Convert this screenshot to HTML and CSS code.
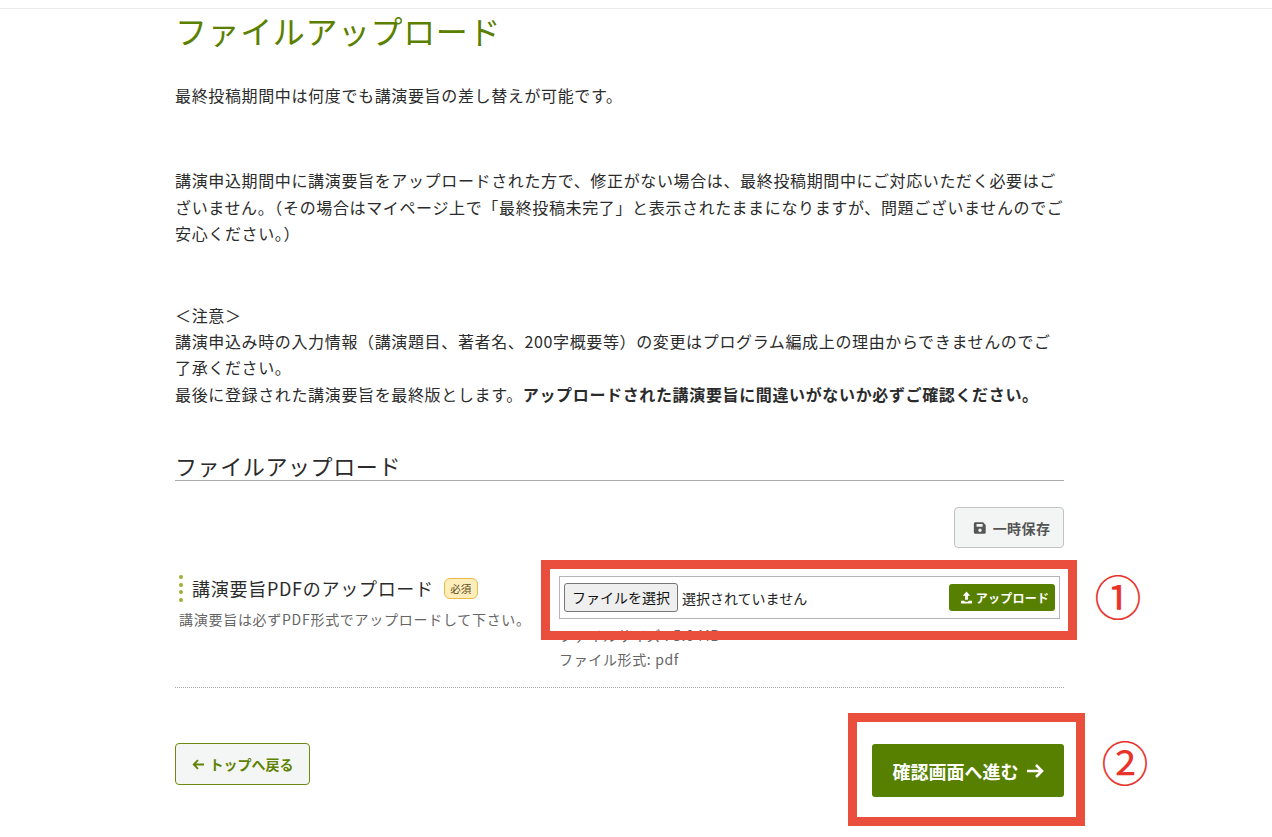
FILE: index.html
```html
<!DOCTYPE html>
<html lang="ja">
<head>
<meta charset="utf-8">
<title>ファイルアップロード</title>
<link rel="stylesheet" href="styles.css">
</head>
<body>
<div class="topline"></div>
<main class="page">
  <h1 class="title">ファイルアップロード</h1>
  <p class="lead">最終投稿期間中は何度でも講演要旨の差し替えが可能です。</p>
  <p class="para para-first">講演申込期間中に講演要旨をアップロードされた方で、修正がない場合は、最終投稿期間中にご対応いただく必要はございません。（その場合はマイページ上で「最終投稿未完了」と表示されたままになりますが、問題ございませんのでご安心ください。）</p>
  <p class="para para-second">＜注意＞<br>講演申込み時の入力情報（講演題目、著者名、200字概要等）の変更はプログラム編成上の理由からできませんのでご了承ください。<br>最後に登録された講演要旨を最終版とします。<strong>アップロードされた講演要旨に間違いがないか必ずご確認ください。</strong></p>
  <h2 class="section">ファイルアップロード</h2>
  <div class="save-row">
    <button class="btn-save" type="button">
      <svg class="ico-save" viewBox="0 0 16 16"><path fill="#555" fill-rule="evenodd" d="M2.5 1.5h9l3 3v8.500a1.500 1.500 0 0 1-1.500 1.500h-10.500a1.500 1.500 0 0 1-1.500-1.500v-10a1.500 1.500 0 0 1 1.500-1.500zM4 3.500v3h7v-3zM8 8.500a2 2 0 1 0 0 4a2 2 0 0 0 0-4z"/></svg>
      一時保存
    </button>
  </div>
  <div class="field">
    <div class="field-label">
      <div class="label-line">
        <span class="dots"><i></i><i></i><i></i><i></i></span>
        <span class="label-text">講演要旨PDFのアップロード</span>
        <span class="badge">必須</span>
      </div>
      <p class="hint">講演要旨は必ずPDF形式でアップロードして下さい。</p>
    </div>
    <div class="field-input">
      <div class="upload-box">
        <span class="file-btn">ファイルを選択</span>
        <span class="file-none">選択されていません</span>
        <button class="btn-upload" type="button">
          <svg class="ico-up" viewBox="0 0 14 14"><path fill="#fff" d="M7 .5 11 5H8.500v4.500h-3V5H3zM1 10.500h3.500c.5 1 1.500 1.200 2.500 1.200s2-.2 2.500-1.200H13v3H1z"/></svg>
          アップロード
        </button>
      </div>
      <p class="meta">ファイルサイズ : 5.0 MB<br>ファイル形式: pdf</p>
    </div>
  </div>
  <div class="actions">
    <a class="btn-back" href="#">
      <svg class="arr-back" viewBox="0 0 14 12"><path fill="none" stroke="#5f8200" stroke-width="2" d="M13 6H2M6.500 1.300 1.800 6l4.700 4.700"/></svg>
      トップへ戻る
    </a>
    <a class="btn-next" href="#">
      確認画面へ進む
      <svg class="arr-next" viewBox="0 0 18 16"><path fill="none" stroke="#fff" stroke-width="2.600" d="M1 8h15M10 2l6 6-6 6"/></svg>
    </a>
  </div>
</main>
<div class="mark mark-1"></div>
<div class="mark mark-2"></div>
<div class="num num-1">①</div>
<div class="num num-2">②</div>
</body>
</html>
```
FILE: styles.css
```css
* { box-sizing: border-box; }
html, body { margin: 0; padding: 0; background: #fff; }
body {
  height: 837px;
  overflow: hidden;
  position: relative;
  font-family: "Noto Sans CJK JP", "Noto Sans", sans-serif;
  color: #2b2b2b;
}
.topline { height: 9px; border-bottom: 1px solid #eaeaea; }
.page { width: 889px; margin-left: 175px; }
.title {
  margin: 0;
  font-size: 32px;
  line-height: 42px;
  font-weight: 400;
  color: #5b8000;
  letter-spacing: .6px;
}
.lead, .para {
  margin: 0;
  font-size: 16px;
  line-height: 26.4px;
  letter-spacing: .64px;
}
.lead { margin-top: 31px; }
.para-first { margin-top: 59px; }
.para-second { margin-top: 55px; }
.para strong { font-weight: 700; }
.section {
  margin: 42px 0 0;
  font-size: 22px;
  line-height: 32px;
  font-weight: 400;
  letter-spacing: .6px;
  height: 32px;
  border-bottom: 1px solid #aaa;
}
.save-row { display: flex; justify-content: flex-end; margin-top: 26px; }
.btn-save {
  width: 110px;
  height: 41px;
  display: flex;
  align-items: center;
  justify-content: center;
  gap: 6px;
  padding: 0 0 0 5px;
  border: 1px solid #bfc3c3;
  border-radius: 4px;
  background: #f3f5f5;
  color: #555;
  font: 700 14px "Noto Sans CJK JP", sans-serif;
  letter-spacing: .4px;
}
.ico-save { width: 14px; height: 14px; }
.field {
  display: flex;
  height: 140px;
  border-bottom: 1px dotted #aaa;
  justify-content: space-between;
}
.field-label { padding-top: 26px; padding-left: 4px; }
.label-line { display: flex; align-items: center; height: 28px; }
.dots { display: flex; flex-direction: column; gap: 3.5px; width: 13px; }
.dots i { width: 4px; height: 4px; border-radius: 50%; background: #9eb033; display: block; }
.label-text { font-size: 18px; letter-spacing: .72px; color: #2b2b2b; }
.badge {
  margin-left: 10px;
  width: 34px;
  height: 21px;
  border: 1px solid #e8b947;
  border-radius: 6px;
  background: #fdeebc;
  font-size: 10.5px;
  line-height: 19px;
  text-align: center;
  color: #5a4a20;
}
.hint { margin: 7px 0 0; font-size: 14px; line-height: 20px; letter-spacing: .72px; color: #666; }
.field-input { width: 505px; padding-top: 28px; }
.upload-box {
  width: 501px;
  height: 43px;
  border: 1px solid #b5b5b5;
  display: flex;
  align-items: center;
  padding: 0 4px;
}
.file-btn {
  height: 29px;
  width: 114px;
  border: 1px solid #767676;
  border-radius: 3px;
  background: #efefef;
  color: #111;
  font-size: 14px;
  line-height: 27px;
  text-align: center;
}
.file-none { margin-left: 4px; font-size: 14px; color: #222; }
.btn-upload {
  margin-left: auto;
  width: 106px;
  height: 27px;
  padding: 0 0 0 5px;
  border: 0;
  border-radius: 3px;
  background: #588000;
  color: #fff;
  font: 700 12px "Noto Sans CJK JP", sans-serif;
  letter-spacing: .25px;
  display: flex;
  align-items: center;
  justify-content: center;
  gap: 3px;
}
.ico-up { width: 13px; height: 13px; }
.meta { margin: 5px 0 0; font-size: 14px; line-height: 23.5px; color: #666; letter-spacing: .64px; }
.actions { display: flex; justify-content: space-between; align-items: flex-start; margin-top: 55px; }
.btn-back {
  width: 135px;
  height: 42px;
  display: flex;
  align-items: center;
  justify-content: center;
  gap: 5px;
  border: 1px solid #6d8a10;
  border-radius: 4px;
  background: #f4f6f6;
  color: #5f8200;
  font-size: 14px;
  font-weight: 700;
  text-decoration: none;
}
.arr-back { width: 13px; height: 11px; }
.btn-next {
  margin-top: 1px;
  width: 192px;
  height: 53px;
  display: flex;
  align-items: center;
  justify-content: center;
  gap: 7px;
  border-radius: 3px;
  background: #588000;
  color: #fff;
  font-size: 18px;
  font-weight: 700;
  text-decoration: none;
}
.arr-next { width: 18px; height: 16px; }
.mark { position: absolute; border: 9px solid #ea4f3d; }
.mark-1 { left: 541px; top: 560px; width: 536px; height: 80px; }
.mark-2 { left: 848px; top: 713px; width: 237px; height: 113px; }
.num {
  position: absolute;
  color: #e8322a;
  font-size: 47px;
  line-height: 50px;
  width: 50px;
  text-align: center;
  -webkit-text-stroke: .15px #e8322a;
}
.num-1 { left: 1093px; top: 570px; }
.num-2 { left: 1100px; top: 736px; }
```
